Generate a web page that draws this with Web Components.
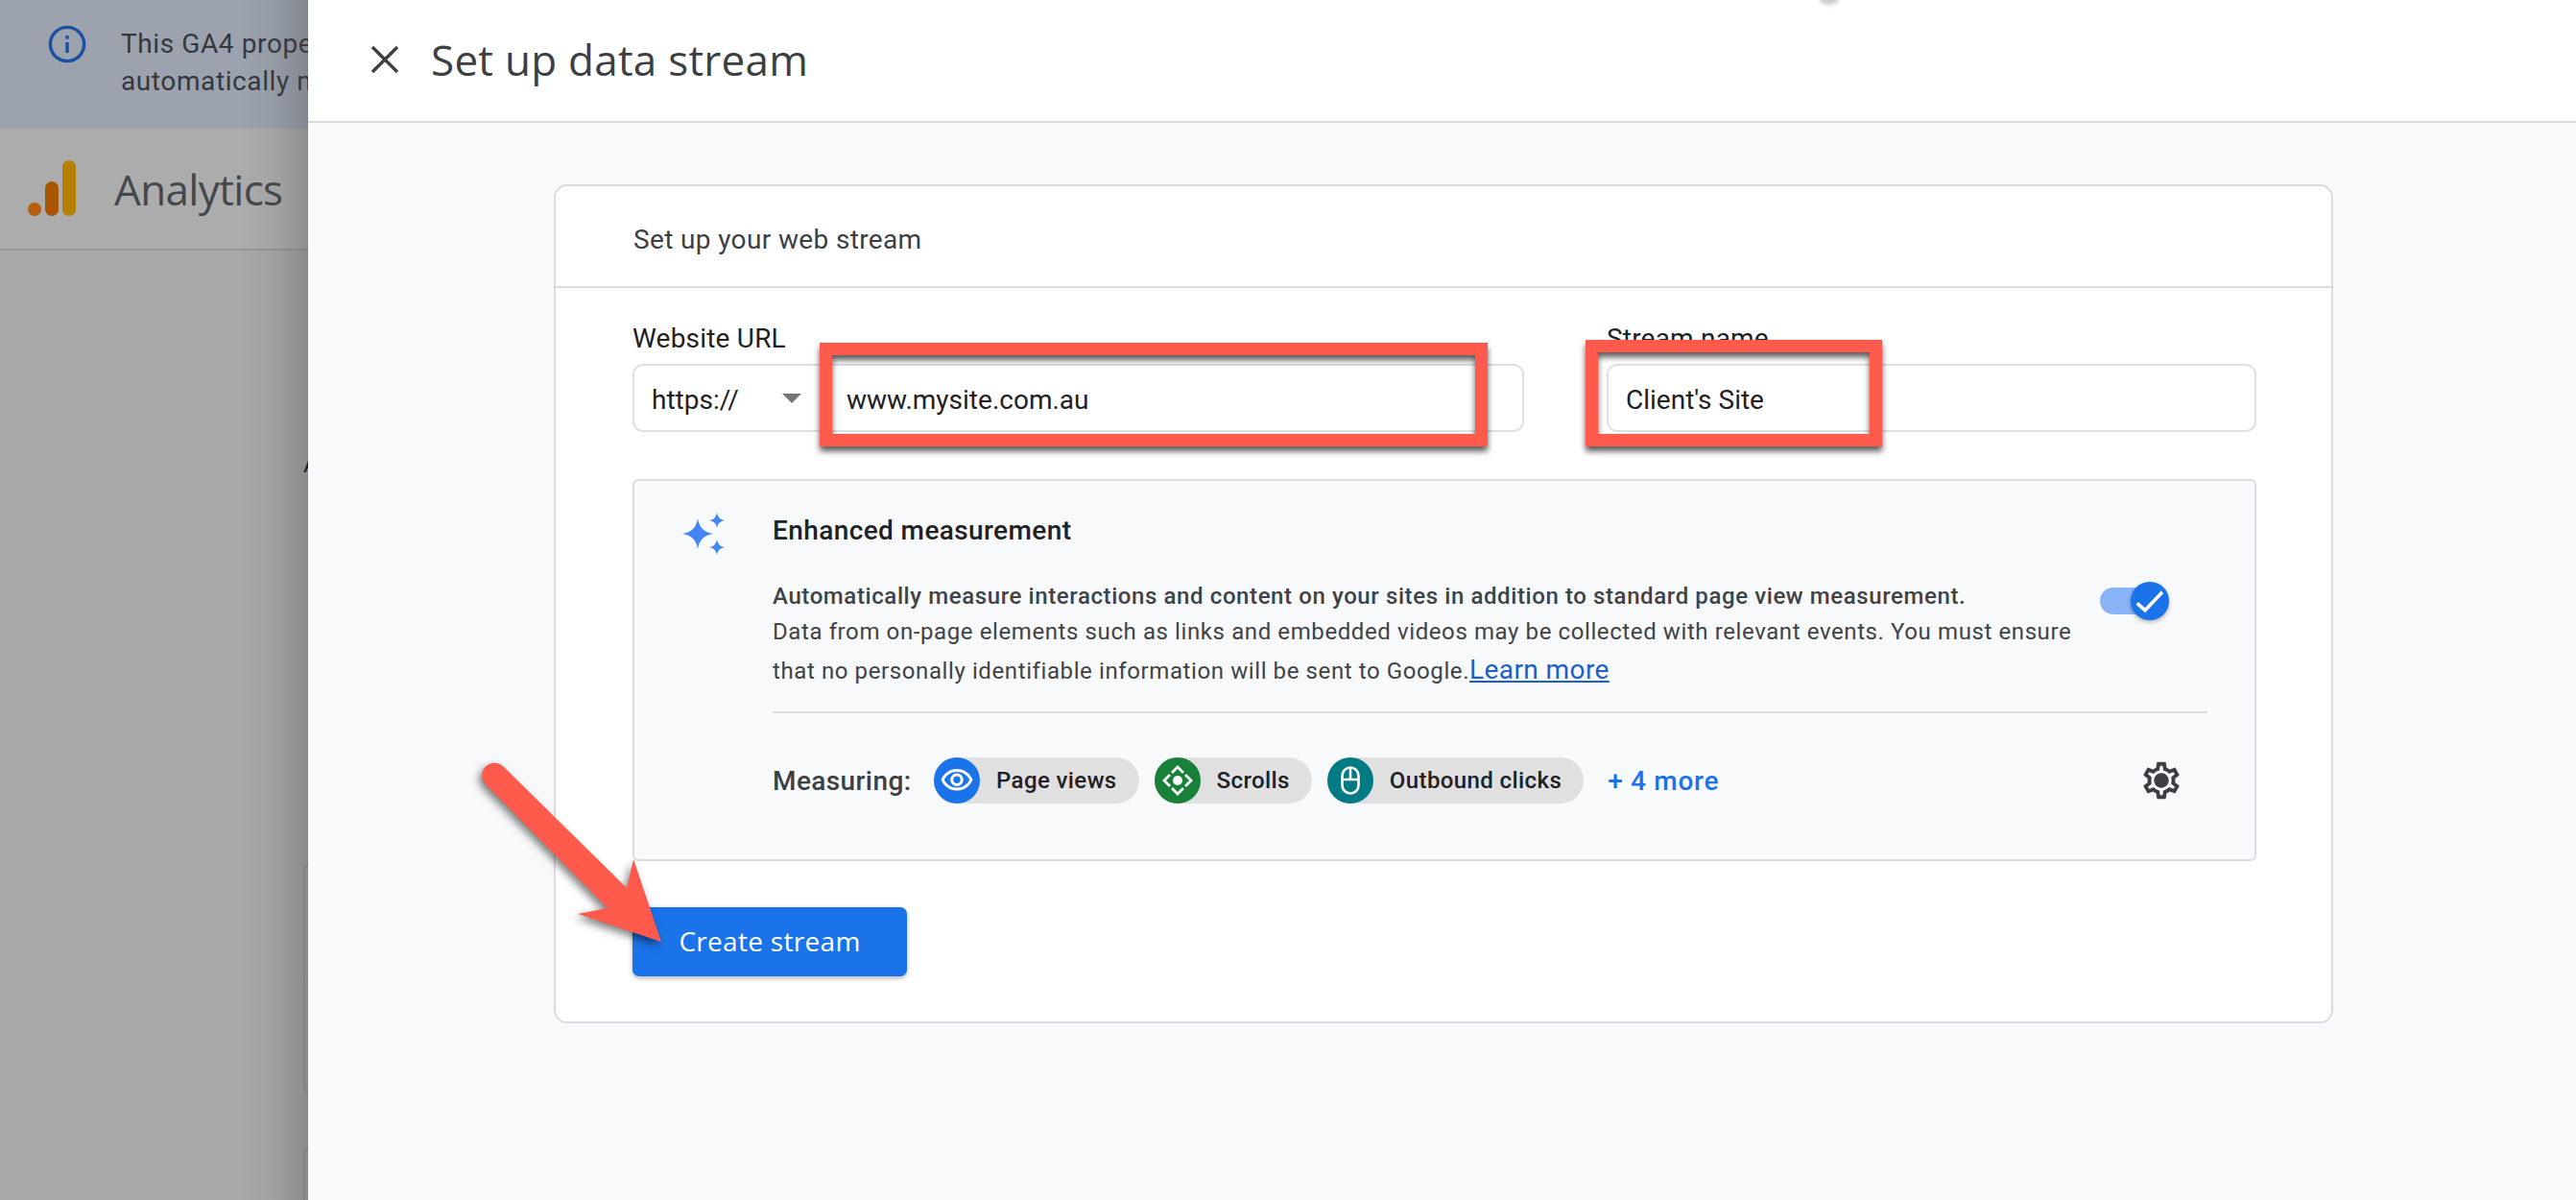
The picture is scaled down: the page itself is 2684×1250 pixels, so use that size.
<!DOCTYPE html>
<html lang="en"><head><meta charset="utf-8"><title>Set up data stream</title>
<style>html,body{margin:0;padding:0;background:#a7a8aa;overflow:hidden}</style>
</head><body>
<ga-app></ga-app>
<script>
function def(name, css, html){
  customElements.define(name, class extends HTMLElement{
    constructor(){super();const s=this.attachShadow({mode:'open'});s.innerHTML='<style>'+css+'</style>'+html;}
  });
}
const ROB='Roboto,"Liberation Sans",sans-serif';
const HEAD='"Open Sans",Roboto,sans-serif';

def('ga-banner',`
:host{display:flex;align-items:flex-start;height:134px;background:#9ca3ae;box-sizing:border-box;padding:26px 0 0 50px;gap:28px;font:28px/39px ${ROB};color:#34383d;flex:none;letter-spacing:.6px}
svg{width:48px;height:48px;margin-top:-4px;flex:none}
.t{white-space:nowrap}
`,`<svg viewBox="0 0 48 48"><circle cx="20" cy="24" r="17.6" fill="none" stroke="#1a4fa3" stroke-width="3.4"/><rect x="18.3" y="22" width="3.4" height="11" fill="#1a4fa3"/><rect x="18.3" y="15" width="3.4" height="3.6" fill="#1a4fa3"/></svg><div class="t">This GA4 property<br>automatically measures</div>`);

def('ga-topbar',`
:host{display:flex;align-items:center;height:127px;background:#acacac;border-bottom:2px solid #97989a;box-sizing:border-box;padding:0 0 0 29px;gap:40px;font:44px ${HEAD};color:#44484c;flex:none}
svg{width:50px;height:58px;flex:none;margin-top:-1px}
span{letter-spacing:-.65px}
`,`<svg viewBox="0 0 50 58"><circle cx="7" cy="51" r="7" fill="#b75f0d"/><rect x="18" y="22" width="14" height="36" rx="7" fill="#a85500"/><rect x="36" y="0" width="14" height="58" rx="7" fill="#b57f00"/></svg><span>Analytics</span>`);

def('ga-backdrop',`
:host{display:flex;flex-direction:column;width:2684px;height:1250px;background:#a7a8aa;overflow:hidden;position:relative}
.under{position:absolute;left:316px;top:0;width:60px;height:1250px;overflow:hidden}
.a{position:absolute;left:0;top:470px;font:24px/28px ${ROB};color:#111}
.o{position:absolute;left:0;width:40px;border:2px solid #979899;border-radius:8px;box-sizing:border-box}
.shade{position:absolute;left:250px;top:0;width:71px;height:1250px;background:linear-gradient(90deg,rgba(70,70,70,0),rgba(70,70,70,.08) 50%,rgba(70,70,70,.3))}
`,`<slot></slot><div class="under"><div class="a">A</div><div class="o" style="top:899px;height:241px"></div><div class="o" style="top:1194px;height:100px"></div></div><div class="shade"></div>`);

def('ga-labelled-field',`
:host{display:block}
label{display:block;font:28px/32px ${ROB};color:#202124;height:42px;letter-spacing:.2px}
.box{display:flex;align-items:center;height:71px;box-sizing:border-box;border:2px solid #dfe0e2;border-radius:11px;padding-top:4px;background:#fff;font:28px ${ROB};color:#202124}
`,`<label><slot name="label"></slot></label><div class="box"><slot></slot></div>`);

def('ga-proto-select',`
:host{display:flex;align-items:center;justify-content:space-between;width:221px;box-sizing:border-box;padding:0 47px 0 18px;flex:none;font:28px ${ROB};color:#202124}
i{display:block;width:0;height:0;margin-top:-4px;border-left:10px solid transparent;border-right:10px solid transparent;border-top:10px solid #757575}
`,`<span><slot></slot></span><i></i>`);

def('ga-chip',`
:host{display:inline-flex;align-items:center;height:48px;background:#e0e0e0;border-radius:24px;padding-right:23px;gap:17px;font:500 24px ${ROB};color:#202124;letter-spacing:.4px;white-space:nowrap}
.c{width:48px;height:48px;border-radius:50%;display:flex;align-items:center;justify-content:center;background:var(--c)}
`,`<div class="c"><slot name="icon"></slot></div><slot></slot>`);

def('ga-toggle',`
:host{display:block;position:relative;width:72px;height:40px;flex:none}
.t{position:absolute;left:0;top:6px;width:60px;height:28px;background:#8ab4f8;border-radius:14px}
.k{position:absolute;right:0;top:0;width:40px;height:40px;border-radius:50%;background:#1a73e8;box-shadow:0 2px 4px rgba(0,0,0,.3);display:flex;align-items:center;justify-content:center}
svg{width:30px;height:30px}
`,`<div class="t"></div><div class="k"><svg viewBox="0 0 30 30"><path d="M1.700 17.300L10 24.700L28 5.700" fill="none" stroke="#fff" stroke-width="3.6"/></svg></div>`);

def('ga-enhanced',`
:host{display:grid;grid-template-columns:144px 1fr;box-sizing:border-box;height:398px;border:2px solid #dadce0;border-radius:6px;background:#f8f9fa;padding-right:49px}
.ic{padding:34px 0 0 50px}
.ic svg{display:block;width:48px;height:48px;overflow:visible}
.m{min-width:0}
h3{margin:0;font:500 28px/34px ${ROB};color:#202124;padding-top:35px;letter-spacing:.4px}
.row{display:flex;margin-top:33px;justify-content:space-between;align-items:flex-start;padding-right:40px}
.txt{width:1380px;font:24px/38px ${ROB};color:#3f4347;letter-spacing:.6px}
b{font-weight:500;display:block;line-height:36px}
a{color:#1a5fcb;font-size:28px;line-height:42px;letter-spacing:.4px;text-decoration:underline}
.tg{margin-top:3px}
.hr{height:2px;background:#dadce0;margin-top:22px}
.meas{display:flex;align-items:center;height:48px;margin-top:46px;position:relative;font:500 28px ${ROB};color:#3c4043;letter-spacing:.4px}
.lb{width:168px;flex:none}
.chips{display:flex;gap:16px}
.more{margin-left:25px;color:#1a73e8;letter-spacing:.7px}
.gear{margin-left:auto;margin-right:25px;width:46px;height:46px;display:block}
`,`<div class="ic"><svg viewBox="0 0 48 48" fill="#4285f4"><path d="M16 5q2 14 16 16q-14 2-16 16q-2-14-16-16q14-2 16-16z"/><path d="M36 -1q1 7 8 8q-7 1-8 8q-1-7-8-8q7-1 8-8z"/><path d="M36 27q1 7 8 8q-7 1-8 8q-1-7-8-8q7-1 8-8z"/></svg></div>
<div class="m"><h3>Enhanced measurement</h3>
<div class="row"><div class="txt"><b>Automatically measure interactions and content on your sites in addition to standard page view measurement.</b>Data from on-page elements such as links and embedded videos may be collected with relevant events. You must ensure that no personally identifiable information will be sent to Google.<a href="#">Learn more</a></div><ga-toggle class="tg"></ga-toggle></div>
<div class="hr"></div>
<div class="meas"><span class="lb">Measuring:</span><div class="chips">
<ga-chip style="--c:#1a73e8">Page views<svg slot="icon" width="36" height="36" viewBox="0 0 24 24" fill="#fff"><path d="M12 6c3.79 0 7.17 2.13 8.82 5.5C19.170 14.870 15.790 17 12 17s-7.170-2.130-8.820-5.500C4.830 8.130 8.210 6 12 6m0-2C7 4 2.730 7.110 1 11.500 2.730 15.890 7 19 12 19s9.270-3.110 11-7.500C21.270 7.110 17 4 12 4zm0 5c1.380 0 2.500 1.120 2.500 2.500S13.380 14 12 14s-2.500-1.120-2.500-2.500S10.620 9 12 9m0-2c-2.480 0-4.500 2.020-4.500 4.500S9.520 16 12 16s4.500-2.020 4.500-4.500S14.480 7 12 7z"/></svg></ga-chip>
<ga-chip style="--c:#188038">Scrolls<svg slot="icon" width="36" height="36" viewBox="0 0 36 36"><circle cx="18" cy="18" r="5" fill="#fff"/><path d="M12 10L18 4l6 6M12 26L18 32l6-6M10 12L4 18l6 6M26 12L32 18l-6 6" fill="none" stroke="#fff" stroke-width="2.800"/></svg></ga-chip>
<ga-chip style="--c:#007b83">Outbound clicks<svg slot="icon" width="36" height="36" viewBox="0 0 36 36"><rect x="9.500" y="4.500" width="17" height="27" rx="8.500" fill="none" stroke="#fff" stroke-width="2.600"/><path d="M18 4.500V17M9.500 17h17" fill="none" stroke="#fff" stroke-width="2.600"/></svg></ga-chip>
</div><span class="more">+ 4 more</span>
<svg class="gear" viewBox="0 0 24 24" fill="#3c4043"><path d="M19.43 12.98c.04-.32.07-.64.07-.98 0-.34-.03-.66-.07-.98l2.11-1.65c.19-.15.24-.42.12-.64l-2-3.46c-.09-.16-.26-.25-.44-.25-.06 0-.12.01-.17.03l-2.49 1c-.52-.4-1.08-.73-1.69-.98l-.38-2.65C14.46 2.18 14.25 2 14 2h-4c-.25 0-.46.18-.49.42l-.38 2.65c-.61.25-1.17.59-1.69.98l-2.49-1c-.06-.02-.12-.03-.18-.03-.17 0-.34.09-.43.25l-2 3.46c-.13.22-.07.49.12.64l2.11 1.65c-.04.32-.07.65-.07.98 0 .33.03.66.07.98l-2.11 1.65c-.19.15-.24.42-.12.64l2 3.46c.09.16.26.25.44.25.06 0 .12-.01.17-.03l2.49-1c.52.4 1.08.73 1.69.98l.38 2.65c.03.24.24.42.49.42h4c.25 0 .46-.18.49-.42l.38-2.65c.61-.25 1.17-.59 1.69-.98l2.49 1c.06.02.12.03.18.03.17 0 .34-.09.43-.25l2-3.46c.12-.22.07-.49-.12-.64l-2.11-1.65zm-1.98-1.71c.04.31.05.52.05.73 0 .21-.02.43-.05.73l-.14 1.13.89.7 1.08.84-.7 1.21-1.27-.51-1.04-.42-.9.68c-.43.32-.84.56-1.25.73l-1.06.43-.16 1.13-.2 1.35h-1.4l-.19-1.35-.16-1.13-1.06-.43c-.43-.18-.83-.41-1.23-.71l-.91-.7-1.06.43-1.27.51-.7-1.21 1.08-.84.89-.7-.14-1.13c-.03-.31-.05-.54-.05-.74s.02-.43.05-.73l.14-1.13-.89-.7-1.08-.84.7-1.21 1.27.51 1.04.42.9-.68c.43-.32.84-.56 1.25-.73l1.06-.43.16-1.13.2-1.35h1.39l.19 1.35.16 1.13 1.06.43c.43.18.83.41 1.23.71l.91.7 1.06-.43 1.27-.51.7 1.21-1.07.85-.89.7.14 1.13zM12 8c-2.21 0-4 1.79-4 4s1.79 4 4 4 4-1.79 4-4-1.79-4-4-4z"/></svg>
</div></div>`);

def('ga-card',`
:host{display:block;box-sizing:border-box;width:1854px;height:874px;background:#fff;border:2px solid #dadce0;border-radius:14px}
.h{height:106px;box-sizing:border-box;border-bottom:2px solid #dadce0;padding:6px 0 0 81px;display:flex;align-items:center;font:28px ${ROB};color:#3c4043;letter-spacing:.36px}
.b{padding:37px 78px 0 80px}
.f{display:grid;grid-template-columns:929px 677px;column-gap:86px;height:162px}
.s{width:286px;height:72px;margin-top:48px;padding-bottom:2px;border-radius:7px;background:#1a73e8;color:#fff;font:500 28px ${HEAD};letter-spacing:.3px;box-shadow:0 2px 5px rgba(0,0,0,.3);display:flex;align-items:center;justify-content:center;box-sizing:border-box}
`,`<div class="h">Set up your web stream</div><div class="b"><div class="f"><ga-labelled-field><span slot="label">Website URL</span><ga-proto-select>https://</ga-proto-select><span>www.mysite.com.au</span></ga-labelled-field><ga-labelled-field><span slot="label">Stream name</span><span style="padding-left:18px">Client's Site</span></ga-labelled-field></div><ga-enhanced></ga-enhanced><div class="s">Create stream</div></div>`);

def('ga-panel',`
:host{position:absolute;left:321px;top:0;width:2363px;height:1250px;background:#f8f9fa;display:flex;flex-direction:column}
header{height:128px;flex:none;box-sizing:border-box;border-bottom:2px solid #dadce0;background:#fff;display:flex;align-items:center;padding:0 0 3px 62px;gap:30px;font:44px ${HEAD};color:#3c4043;letter-spacing:.25px}
header svg{width:36px;height:36px;flex:none}
.body{padding:64px 0 0 256px}
`,`<header><svg viewBox="0 0 36 36"><path d="M5 5l26 26M31 5L5 31" stroke="#3c4043" stroke-width="3.4" fill="none"/></svg><span>Set up data stream</span></header><div class="body"><ga-card></ga-card></div>`);

def('ga-callout',`
:host{position:absolute;box-sizing:border-box;border:13.5px solid #ff5a4c;filter:drop-shadow(0 5px 3px rgba(0,0,0,.65))}
`,``);

def('ga-arrow',`
:host{position:absolute;left:480px;top:780px;width:240px;height:230px;display:block;filter:drop-shadow(-3px 4px 4px rgba(0,0,0,.5))}
svg{display:block;width:100%;height:100%}
`,`<svg viewBox="480 780 240 230"><path fill="#ff5a4c" d="M524.500 798.500L653 925L660 895L689 981L602 952L633 946L506 817A13 13 0 0 1 524.500 798.500Z"/></svg>`);

def('ga-app',`
:host{display:block;position:relative;width:2684px;height:1250px;overflow:hidden}
.blob{position:absolute;left:1896px;top:-5px;width:20px;height:10px;border-radius:50%;background:#c9cacb;filter:blur(2px)}
`,`<ga-backdrop><ga-banner></ga-banner><ga-topbar></ga-topbar></ga-backdrop><ga-panel></ga-panel>
<div class="blob"></div>
<ga-callout style="left:854px;top:357px;width:696px;height:108px"></ga-callout>
<ga-callout style="left:1652px;top:354px;width:309px;height:111px"></ga-callout>
<ga-arrow></ga-arrow>`);
</script>
</body></html>
